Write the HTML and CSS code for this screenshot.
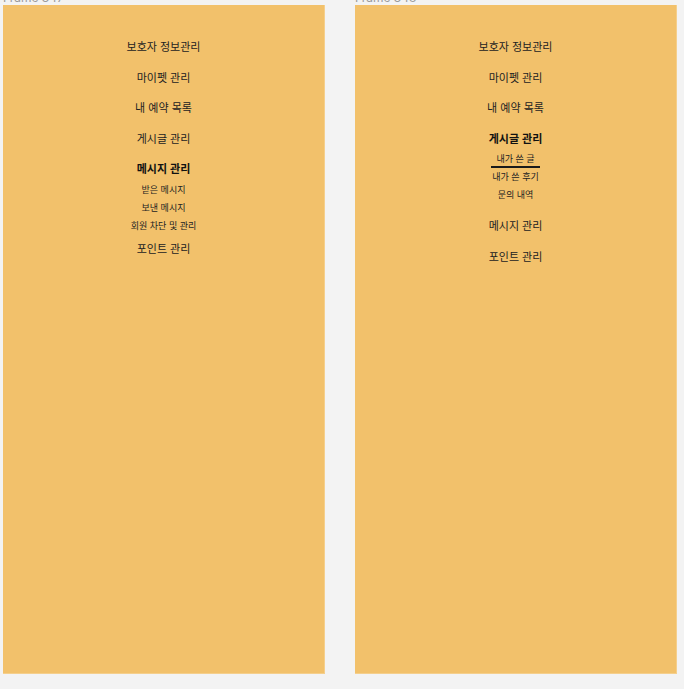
FILE: index.html
```html
<!DOCTYPE html>
<html lang="ko">
<head>
<meta charset="utf-8">
<title>Menu frames</title>
<link rel="stylesheet" href="styles.css">
</head>
<body>
<div class="canvas">
  <section class="frame">
    <div class="frame-label">Frame 347</div>
    <nav class="panel">
      <a class="item">보호자 정보관리</a>
      <a class="item">마이펫 관리</a>
      <a class="item">내 예약 목록</a>
      <a class="item">게시글 관리</a>
      <a class="item active">메시지 관리</a>
      <div class="sub sub-tight">
        <a class="sub-item">받은 메시지</a>
        <a class="sub-item">보낸 메시지</a>
        <a class="sub-item">회원 차단 및 관리</a>
      </div>
      <a class="item">포인트 관리</a>
    </nav>
  </section>
  <section class="frame">
    <div class="frame-label">Frame 348</div>
    <nav class="panel">
      <a class="item">보호자 정보관리</a>
      <a class="item">마이펫 관리</a>
      <a class="item">내 예약 목록</a>
      <a class="item active">게시글 관리</a>
      <div class="sub sub-spaced">
        <a class="sub-item"><span class="current">내가 쓴 글</span></a>
        <a class="sub-item">내가 쓴 후기</a>
        <a class="sub-item">문의 내역</a>
      </div>
      <a class="item">메시지 관리</a>
      <a class="item">포인트 관리</a>
    </nav>
  </section>
</div>
</body>
</html>
```

FILE: styles.css
```css
* { box-sizing: border-box; }
html, body { margin: 0; padding: 0; }
body {
  background: #f3f3f3;
  font-family: "Noto Sans CJK KR", "Noto Sans", sans-serif;
  color: #222;
  width: 684px;
  height: 689px;
  overflow: hidden;
}
.canvas {
  display: flex;
  gap: 30px;
  padding-left: 3px;
}
.frame {
  display: flex;
  flex-direction: column;
}
.frame-label {
  font-family: "Inter", "Noto Sans", sans-serif;
  font-size: 12px;
  line-height: 14px;
  height: 14px;
  margin-top: -9px;
  color: #9a9a9a;
}
.panel {
  width: 322px;
  height: 669px;
  background: #f2c16b;
  border-right: 1px solid #f5cf8c;
  border-bottom: 1px solid #f5cf8c;
  display: flex;
  flex-direction: column;
  align-items: center;
  padding-top: 26px;
}
.item {
  height: 30.5px;
  line-height: 30.5px;
  font-size: 11px;
  color: #222;
}
.item.active {
  font-weight: 700;
  color: #111;
}
.sub {
  display: flex;
  flex-direction: column;
  align-items: center;
  margin-top: -3px;
}
.sub-tight { margin-bottom: -2px; }
.sub-spaced { margin-bottom: 6px; }
.sub-item {
  height: 18px;
  line-height: 18px;
  font-size: 9px;
  color: #222;
  display: flex;
  justify-content: center;
}
.current {
  display: block;
  padding: 0 5px;
  height: 18px;
  border-bottom: 2.5px solid #1a1a1a;
}
```
